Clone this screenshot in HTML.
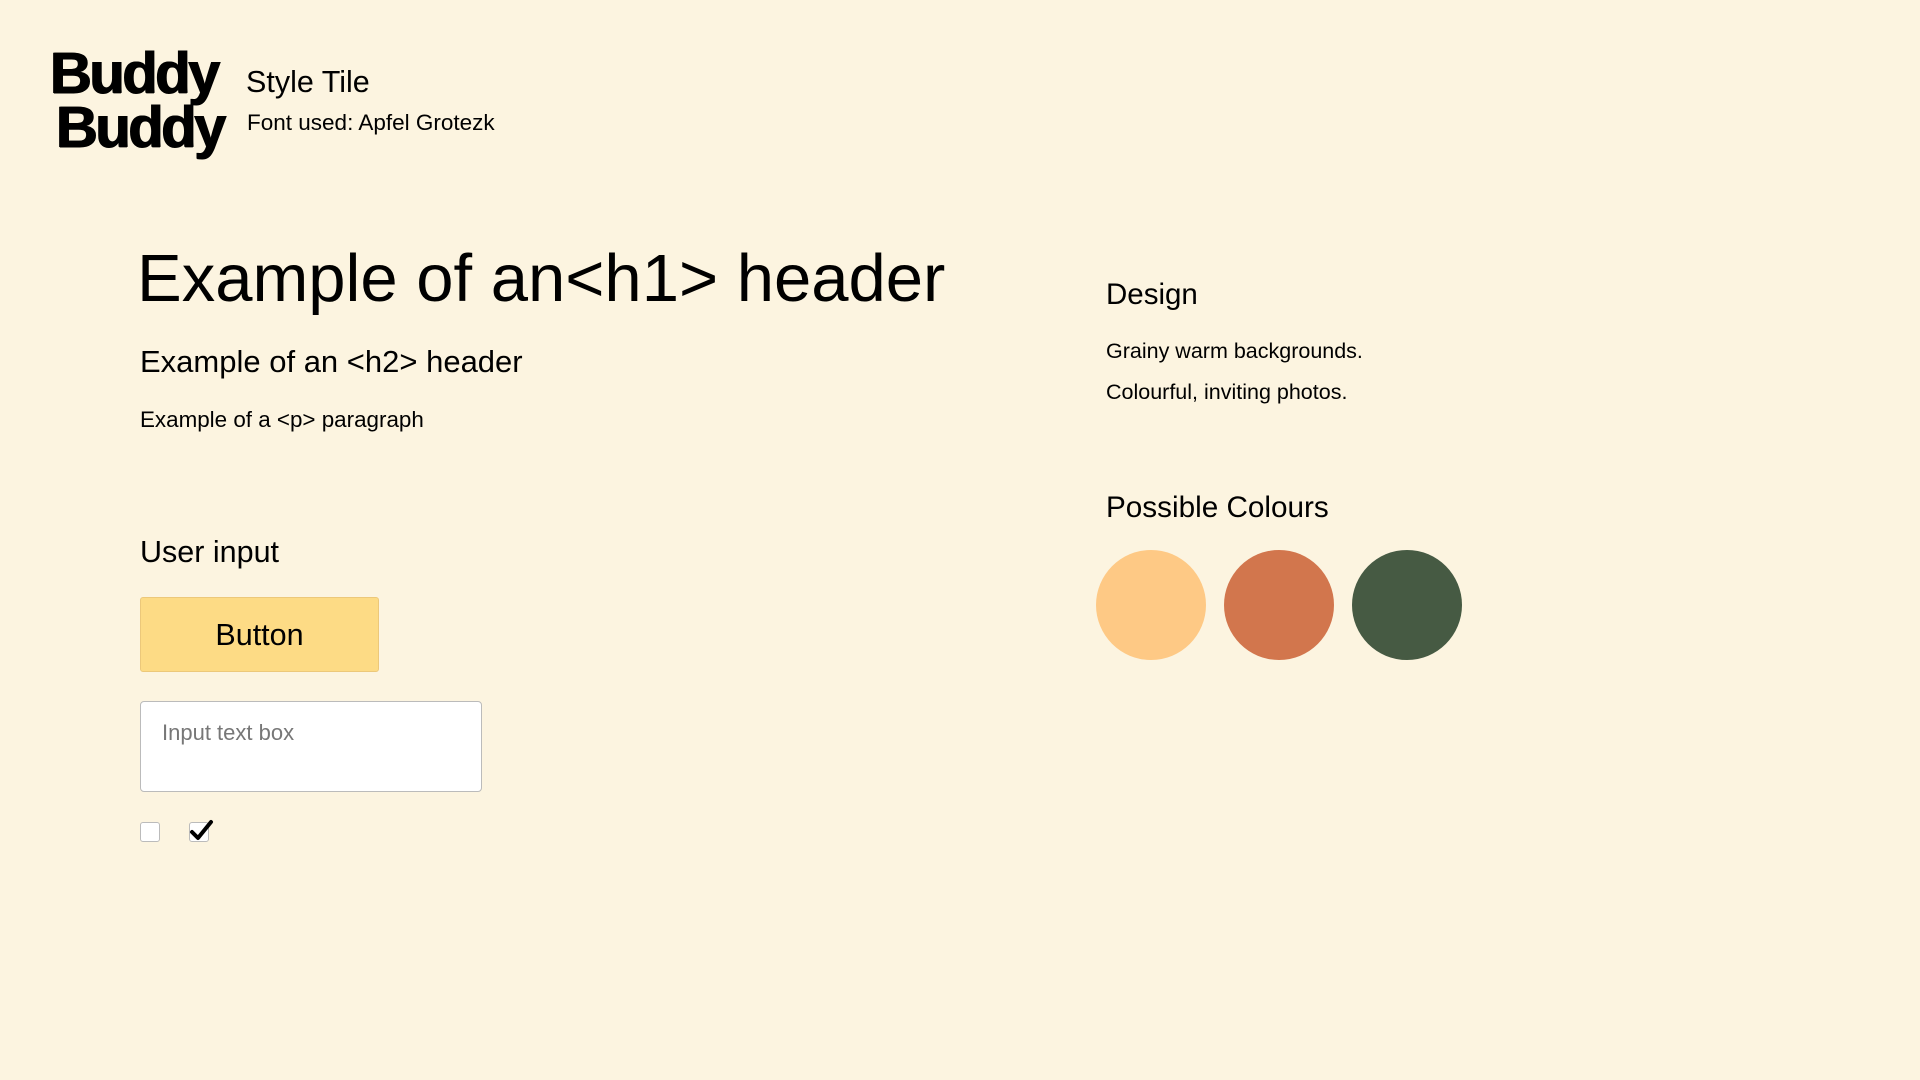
<!DOCTYPE html>
<html><head><meta charset="utf-8"><style>
*{margin:0;padding:0;box-sizing:border-box}
body{width:1920px;height:1080px;background:#fcf4e0;font-family:"Liberation Sans",sans-serif;color:#000;position:relative;overflow:hidden}
.a{position:absolute;white-space:nowrap}
.logo{font-weight:bold;font-size:58px;line-height:54px;letter-spacing:-2.5px;left:50px;top:47px;text-shadow:0.7px 0 0 #000,-0.7px 0 0 #000,0 0.7px 0 #000}
.c{position:absolute;width:110px;height:110px;border-radius:50%;top:550px}
.cb{position:absolute;top:822px;width:20px;height:20px;border:1px solid #bbb;border-radius:3px;background:#fff}
</style></head><body>
<div class="a logo">Buddy<br><span style="padding-left:6px">Buddy</span></div>
<div class="a" style="left:246px;top:65px;font-size:30.5px">Style Tile</div>
<div class="a" style="left:247px;top:110px;font-size:22.5px">Font used: Apfel Grotezk</div>
<div class="a" style="left:137px;top:240px;font-size:67px">Example of an&lt;h1&gt; header</div>
<div class="a" style="left:140px;top:344px;font-size:31px">Example of an &lt;h2&gt; header</div>
<div class="a" style="left:140px;top:407px;font-size:22.4px">Example of a &lt;p&gt; paragraph</div>
<div class="a" style="left:140px;top:535px;font-size:30.5px">User input</div>
<div class="a" style="left:140px;top:597px;width:239px;height:75px;background:#fddb85;border:1px solid #ecc87a;border-radius:3px;font-size:30.5px;text-align:center;line-height:75px">Button</div>
<div class="a" style="left:140px;top:701px;width:342px;height:91px;background:#fff;border:1px solid #bbb;border-radius:4px"></div>
<div class="a" style="left:162px;top:720px;font-size:22px;color:#777">Input text box</div>
<div class="cb" style="left:140px"></div>
<div class="cb" style="left:189px"><svg width="26" height="24" style="position:absolute;left:-1px;top:-4px" viewBox="0 0 26 24"><path d="M3 13 L9 19 L22 3" fill="none" stroke="#000" stroke-width="4" stroke-linecap="round" stroke-linejoin="round"/></svg></div>
<div class="a" style="left:1106px;top:278px;font-size:29.5px">Design</div>
<div class="a" style="left:1106px;top:339px;font-size:21.5px">Grainy warm backgrounds.</div>
<div class="a" style="left:1106px;top:380px;font-size:21.5px">Colourful, inviting photos.</div>
<div class="a" style="left:1106px;top:491px;font-size:29.7px">Possible Colours</div>
<div class="c" style="left:1096px;background:#fec985"></div>
<div class="c" style="left:1224px;background:#d2764d"></div>
<div class="c" style="left:1352px;background:#465a43"></div>
</body></html>
